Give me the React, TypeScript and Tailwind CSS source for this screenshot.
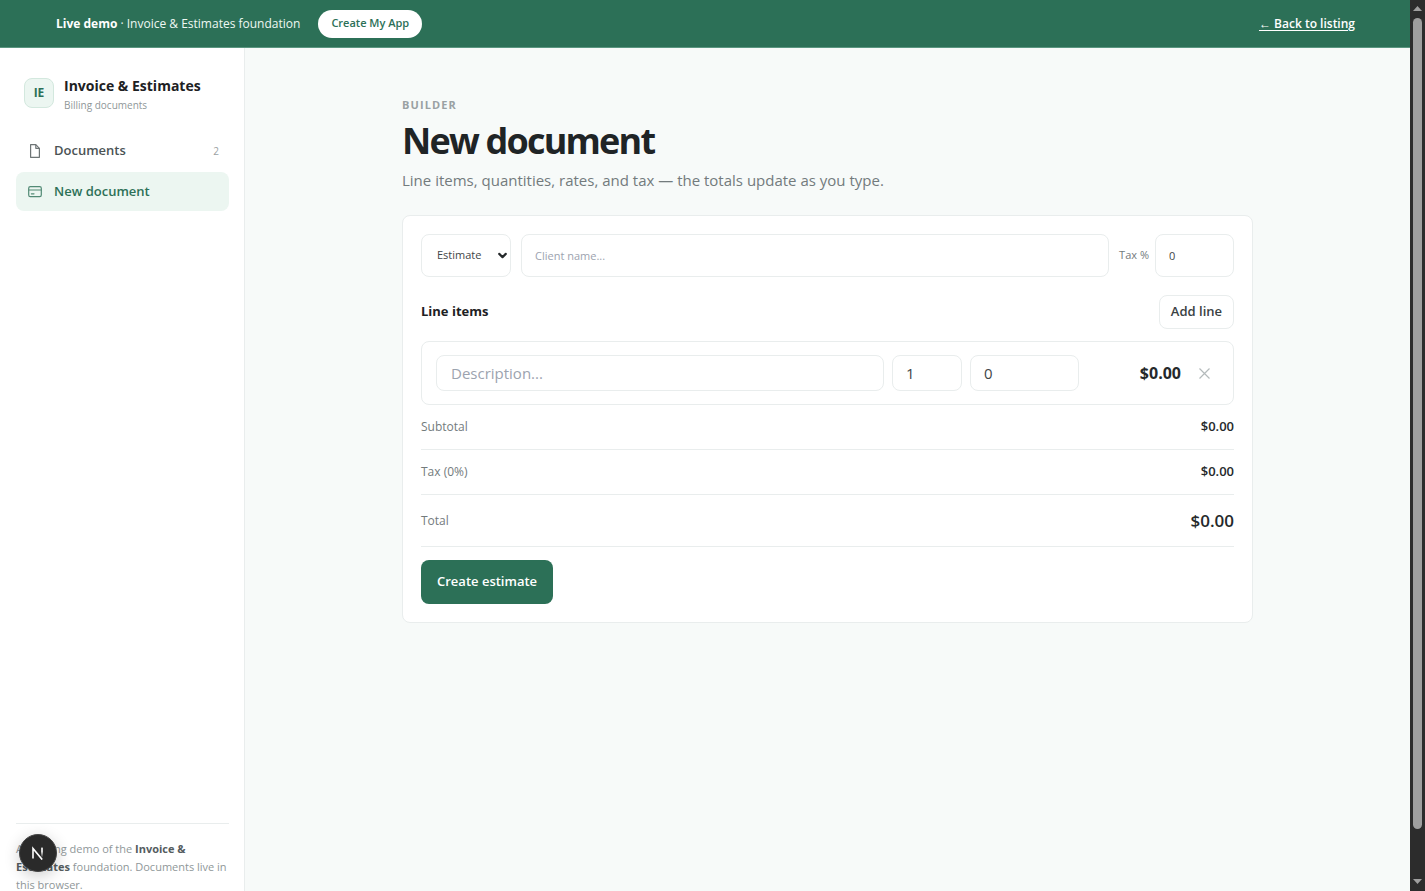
import React, { useState } from 'react';
import { ChevronDown } from 'lucide-react';

interface LineItem {
  id: number;
  description: string;
  quantity: string;
  rate: string;
}

const money = (value: number) => `$${value.toFixed(2)}`;

const fieldClass =
  'min-w-0 bg-white border border-[#e9eded] rounded-lg text-[#3f4648] placeholder:text-[#9ca3af] outline-none focus:border-[#2c7057]';

const DocumentIcon = () => (
  <svg width="14" height="14" viewBox="0 0 14 14" fill="none" stroke="currentColor" strokeWidth="1.2" strokeLinejoin="round" className="opacity-80" aria-hidden="true">
    <path d="M2.6 .7h5.2l3.6 3.6v9H2.6z" />
    <path d="M7.8 .7v3.6h3.6" />
  </svg>
);

const CardIcon = () => (
  <svg width="14" height="14" viewBox="0 0 14 14" fill="none" stroke="currentColor" strokeWidth="1.2" strokeLinecap="round" className="opacity-80" aria-hidden="true">
    <rect x=".7" y="1.7" width="12.6" height="10" rx="1.6" />
    <path d="M.7 5h12.6M3.4 8.8h2.6" />
  </svg>
);

const TopBar = () => (
  <header className="h-12 shrink-0 flex items-center justify-between pl-14 pr-[55px] bg-[#2c7057] border-b border-[#5a9680] text-xs text-[#eef8f3]">
    <div className="flex items-center gap-[18px]">
      <p>
        <strong className="font-bold text-white">Live demo</strong> · Invoice &amp; Estimates foundation
      </p>
      <a href="#create" className="h-7 px-[13px] flex items-center rounded-full bg-white text-[#2c7057] text-[11px] font-semibold">
        Create My App
      </a>
    </div>
    <a href="#listing" className="font-semibold text-white underline underline-offset-2">
      ← Back to listing
    </a>
  </header>
);

const Sidebar = () => (
  <aside className="w-[245px] h-screen shrink-0 flex flex-col pl-4 pr-[15px] pt-7 pb-[45px] bg-white border-r border-[#e9eded]">
    <div className="flex items-start gap-2.5 px-2">
      <span className="mt-0.5 size-[30px] flex items-center justify-center rounded-lg border border-[#d3e8de] bg-[#ecf6f1] text-[#2c7057] text-xs font-bold">
        IE
      </span>
      <div>
        <p className="text-sm leading-5 font-bold text-[#1d2123]">Invoice &amp; Estimates</p>
        <p className="text-[10px] leading-[18px] text-[#8f9799]">Billing documents</p>
      </div>
    </div>

    <nav className="mt-[18px] flex flex-col gap-0.5 text-[13px] font-semibold">
      <a href="#documents" className="h-[38px] px-3 flex items-center gap-3 rounded-lg text-[#4b5355]">
        <DocumentIcon />
        Documents
        <span className="ml-auto -mr-0.5 text-[10px] font-normal text-[#9aa1a3]">2</span>
      </a>
      <a href="#new" aria-current="page" className="h-[39px] px-3 flex items-center gap-3 rounded-lg bg-[#ecf6f1] text-[#2c7057]">
        <CardIcon />
        New document
      </a>
    </nav>

    <p className="mt-auto pt-4 border-t border-[#e9eded] text-[11px] leading-[18px] text-[#8f9799]">
      A working demo of the <strong className="font-bold text-[#555d5f]">Invoice &amp; Estimates</strong> foundation.
      Documents live in this browser.
    </p>
  </aside>
);

interface TotalRowProps {
  label: string;
  value: number;
  large?: boolean;
}

const TotalRow = ({ label, value, large }: TotalRowProps) => (
  <div className={`flex items-center justify-between border-b border-[#e9eded] ${large ? 'h-[52px]' : 'h-[45px]'}`}>
    <dt className="text-xs text-[#737b7d]">{label}</dt>
    <dd className={`font-semibold text-[#25292b] ${large ? 'text-[17px]' : 'text-[13px]'}`}>{money(value)}</dd>
  </div>
);

const DocumentBuilder = () => {
  const [kind, setKind] = useState('Estimate');
  const [client, setClient] = useState('');
  const [tax, setTax] = useState('0');
  const [items, setItems] = useState<LineItem[]>([{ id: 1, description: '', quantity: '1', rate: '0' }]);

  const updateItem = (id: number, patch: Partial<LineItem>) =>
    setItems(prev => prev.map(item => (item.id === id ? { ...item, ...patch } : item)));

  const addItem = () =>
    setItems(prev => [...prev, { id: Date.now(), description: '', quantity: '1', rate: '0' }]);

  const lineTotal = (item: LineItem) => Number(item.quantity) * Number(item.rate);
  const subtotal = items.reduce((sum, item) => sum + lineTotal(item), 0);
  const taxAmount = (subtotal * Number(tax)) / 100;

  return (
    <section className="mt-[23px] p-[18px] bg-white border border-[#e9eded] rounded-lg">
      <div className="flex items-center gap-2.5 text-[11px]">
        <div className="relative">
          <select
            aria-label="Document type"
            value={kind}
            onChange={(e) => setKind(e.target.value)}
            className={`${fieldClass} appearance-none w-[90px] h-[43px] pl-[15px]`}
          >
            <option>Estimate</option>
            <option>Invoice</option>
          </select>
          <ChevronDown size={13} strokeWidth={4} className="absolute right-0.5 top-[15px] text-[#25292b] pointer-events-none" />
        </div>
        <input
          type="text"
          aria-label="Client name"
          placeholder="Client name..."
          value={client}
          onChange={(e) => setClient(e.target.value)}
          className={`${fieldClass} flex-1 h-[43px] px-[13px]`}
        />
        <label className="flex items-center gap-1.5 text-[#737b7d]">
          Tax %
          <input
            type="text"
            inputMode="decimal"
            value={tax}
            onChange={(e) => setTax(e.target.value)}
            className={`${fieldClass} w-[79px] h-[43px] px-[13px]`}
          />
        </label>
      </div>

      <div className="mt-[18px] mb-3 flex items-center justify-between">
        <h2 className="text-[13px] font-bold text-[#1d2123]">Line items</h2>
        <button
          onClick={addItem}
          className="h-[34px] px-[11px] border border-[#e9eded] rounded-lg text-[13px] font-semibold text-[#3a4143]"
        >
          Add line
        </button>
      </div>

      <div className="flex flex-col gap-2">
        {items.map(item => (
          <div
            key={item.id}
            className="grid grid-cols-[1fr_70px_109px_94px_30px] items-center gap-2 px-3.5 py-[13px] border border-[#e9eded] rounded-lg text-[15px]"
          >
            <input
              type="text"
              aria-label="Description"
              placeholder="Description..."
              value={item.description}
              onChange={(e) => updateItem(item.id, { description: e.target.value })}
              className={`${fieldClass} h-9 px-3.5`}
            />
            <input
              type="text"
              inputMode="numeric"
              aria-label="Quantity"
              value={item.quantity}
              onChange={(e) => updateItem(item.id, { quantity: e.target.value })}
              className={`${fieldClass} h-9 px-[13px]`}
            />
            <input
              type="text"
              inputMode="decimal"
              aria-label="Rate"
              value={item.rate}
              onChange={(e) => updateItem(item.id, { rate: e.target.value })}
              className={`${fieldClass} h-9 px-[13px]`}
            />
            <span className="text-right text-base leading-5 font-bold text-[#25292b]">{money(lineTotal(item))}</span>
            <button
              aria-label="Remove line"
              onClick={() => setItems(prev => prev.filter(other => other.id !== item.id))}
              className="size-[30px] flex items-center justify-center text-[#b4babb]"
            >
              <svg width="11" height="11" viewBox="0 0 11 11" stroke="currentColor" strokeWidth="1.2" aria-hidden="true">
                <path d="M.5 .5l10 10M10.5 .5l-10 10" />
              </svg>
            </button>
          </div>
        ))}
      </div>

      <dl>
        <TotalRow label="Subtotal" value={subtotal} />
        <TotalRow label={`Tax (${tax || 0}%)`} value={taxAmount} />
        <TotalRow label="Total" value={subtotal + taxAmount} large />
      </dl>

      <button className="mt-[13px] h-11 px-4 rounded-lg bg-[#2c7057] text-[13px] font-semibold text-white">
        Create {kind.toLowerCase()}
      </button>
    </section>
  );
};

const ScrollRail = () => (
  <div className="w-[15px] shrink-0 flex flex-col items-center bg-[#2c2c2c] text-[#9f9f9f]" aria-hidden="true">
    <svg width="9" height="18" viewBox="0 0 9 18" fill="currentColor">
      <path d="M0 11l4.5-5L9 11z" />
    </svg>
    <div className="w-[9px] h-[811px] rounded-full bg-[#9f9f9f]" />
    <svg width="9" height="18" viewBox="0 0 9 18" fill="currentColor" className="mt-auto">
      <path d="M0 6l4.5 5L9 6z" />
    </svg>
  </div>
);

const DevBadge = () => (
  <button
    aria-label="Open developer tools"
    className="fixed left-[19px] bottom-[19px] size-[38px] flex items-center justify-center rounded-full bg-[#2a2a2a] border border-[#444444] shadow-[0_4px_16px_rgba(0,0,0,0.2)]"
  >
    <svg width="14" height="14" viewBox="0 0 14 14" fill="none" strokeWidth="1.6" aria-hidden="true">
      <defs>
        <linearGradient id="stem" x1="0" y1="0" x2="0" y2="1">
          <stop offset="0.4" stopColor="#ffffff" />
          <stop offset="1" stopColor="#ffffff" stopOpacity="0" />
        </linearGradient>
      </defs>
      <path d="M2 12.6V2.4L11.2 13.6" stroke="#ffffff" />
      <rect x="10.2" y="1.6" width="1.6" height="10" fill="url(#stem)" />
    </svg>
  </button>
);

export default function App() {
  return (
    <div className="h-screen flex overflow-hidden bg-[#f7faf9] font-['Open_Sans','Noto_Sans',sans-serif]">
      <div className="flex-1 min-w-0 flex flex-col">
        <TopBar />
        <div className="flex">
          <Sidebar />
          <main className="flex-1 min-w-0 px-10 pt-12">
            <div className="max-w-[851px] mx-auto">
              <p className="text-[11px] leading-[18px] font-bold uppercase tracking-widest text-[#9aa1a3]">Builder</p>
              <h1 className="mt-1 text-4xl leading-[46px] font-bold tracking-tighter text-[#1f2426]">New document</h1>
              <p className="mt-1 text-[15px] leading-6 text-[#737b7d]">
                Line items, quantities, rates, and tax — the totals update as you type.
              </p>
              <DocumentBuilder />
            </div>
          </main>
        </div>
      </div>
      <ScrollRail />
      <DevBadge />
    </div>
  );
}
